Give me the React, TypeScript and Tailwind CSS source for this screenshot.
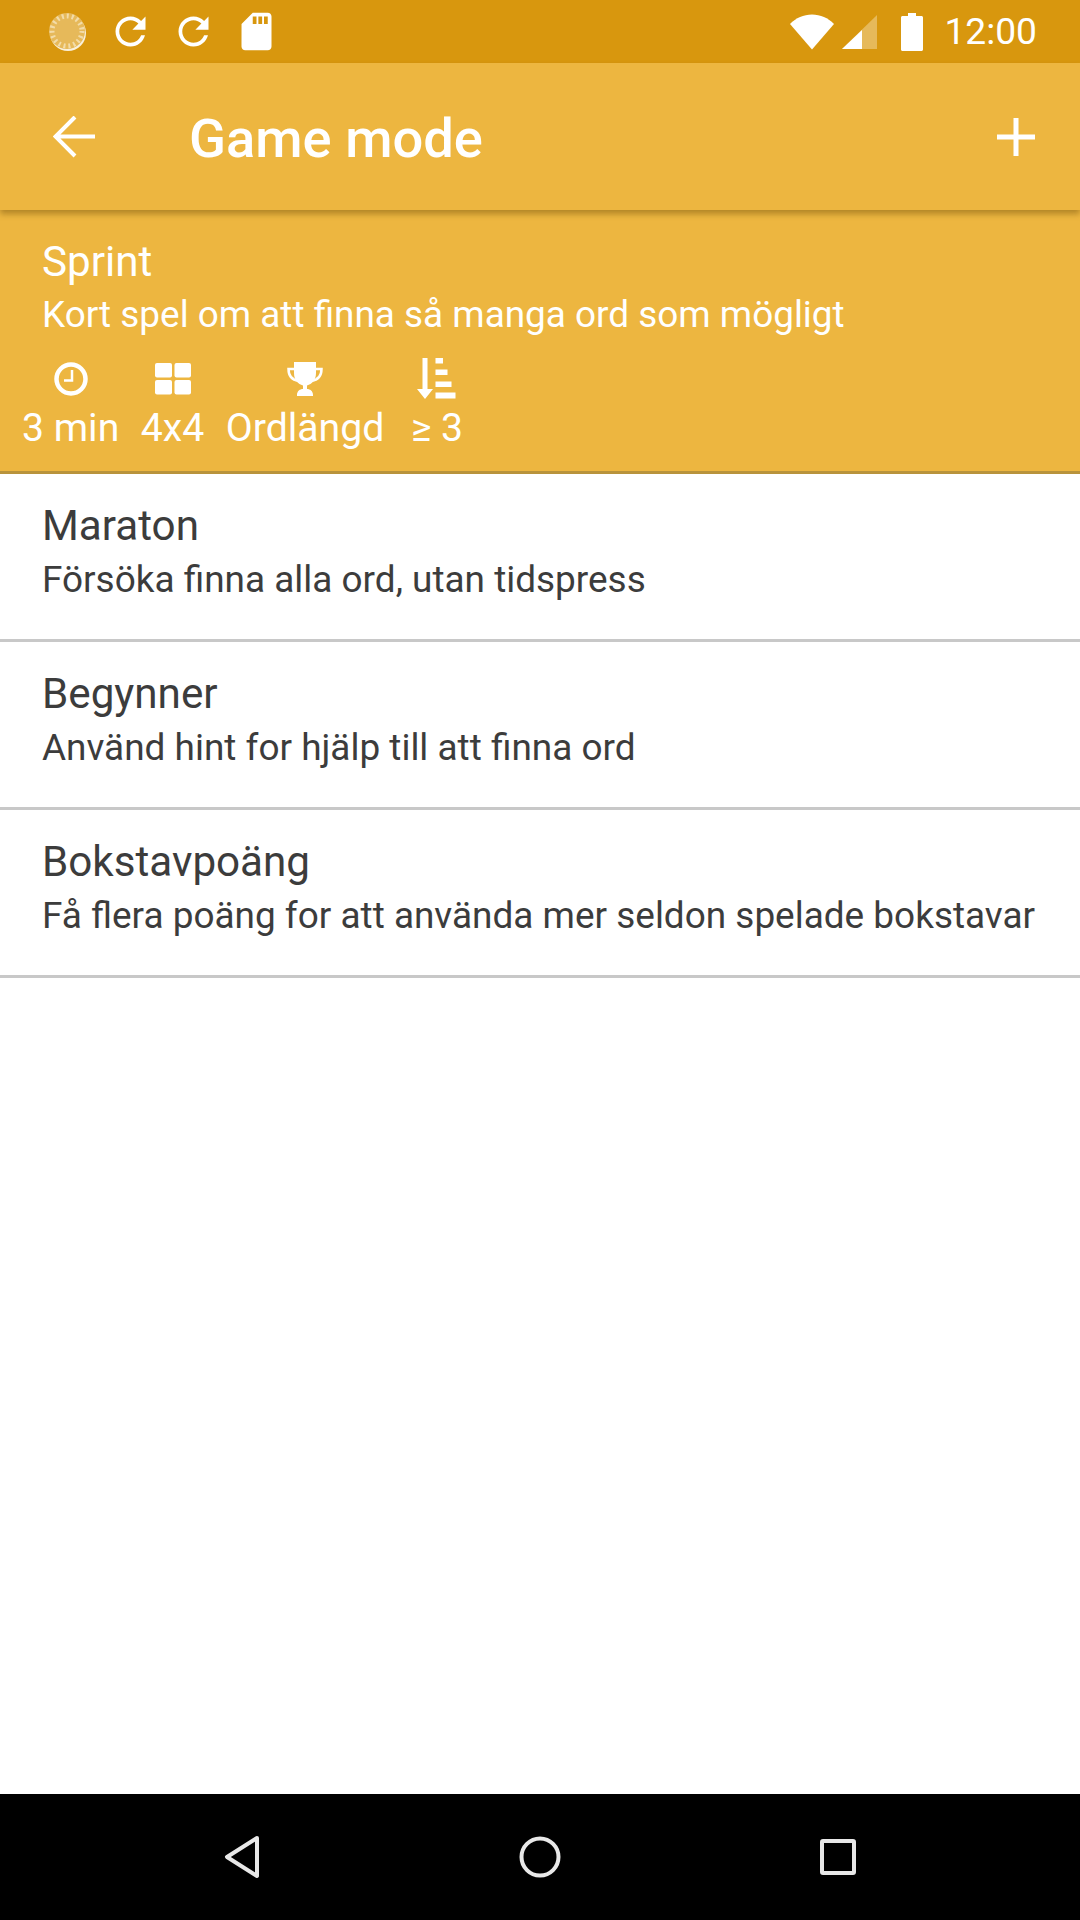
import React from 'react';

const RefreshIcon = () => (
  <svg viewBox="0 0 24 24" className="w-[45px] h-[45px] fill-white">
    <path d="M17.65 6.35C16.2 4.9 14.21 4 12 4c-4.42 0-7.99 3.58-7.99 8s3.57 8 7.99 8c3.73 0 6.84-2.55 7.73-6h-2.08c-.82 2.33-3.04 4-5.65 4-3.31 0-6-2.69-6-6s2.69-6 6-6c1.66 0 3.14.69 4.22 1.78L13 11h7V4l-2.35 2.35z" />
  </svg>
);

const StatusBar = () => (
  <div className="h-[63px] bg-[#d8970e] flex items-center justify-between pl-[49px] pr-[43px]">
    <div className="flex items-center">
      <svg viewBox="0 0 38 38" className="w-[38px] h-[38px]">
        <circle cx="19" cy="20" r="18" fill="#ffffff" opacity="0.85" />
        <circle cx="18" cy="18" r="18" fill="#e6b95a" />
        <circle cx="18" cy="18" r="15" fill="none" stroke="#f3dca8" strokeWidth="5" strokeDasharray="2 3" />
      </svg>
      <div className="flex items-center gap-[18px] ml-[21px]">
        <RefreshIcon />
        <RefreshIcon />
        <svg viewBox="0 0 24 24" className="w-[45px] h-[45px] fill-white">
          <path d="M18 2h-8L4.02 8 4 20c0 1.1.9 2 2 2h12c1.1 0 2-.9 2-2V4c0-1.1-.9-2-2-2zm-6 6h-2V4h2v4zm3 0h-2V4h2v4zm3 0h-2V4h2v4z" />
        </svg>
      </div>
    </div>
    <div className="flex items-center">
      <svg viewBox="0 0 46 38" className="w-[46px] h-[38px] fill-white">
        <path d="M23 36.500 L1 11 C7 5 14.500 1.500 23 1.500 C31.500 1.500 39 5 45 11 Z" />
      </svg>
      <svg viewBox="0 0 36 36" className="w-[36px] h-[36px] ml-[7px]">
        <path d="M0 35 L35 1 V35 Z" fill="#e6b95a" />
        <path d="M0 35 L20 16 V35 Z" fill="#ffffff" />
      </svg>
      <svg viewBox="0 0 22 38" className="w-[22px] h-[38px] ml-[23px] fill-white">
        <path d="M7 0h8v3h5.500c.8 0 1.500.7 1.500 1.500V36.500c0 .8-.7 1.500-1.500 1.500H1.500C.7 38 0 37.300 0 36.500V4.500C0 3.700.7 3 1.500 3H7z" />
      </svg>
      <span className="ml-[21px] text-[37.200px] text-white font-['Roboto',sans-serif] leading-none">12:00</span>
    </div>
  </div>
);

const Toolbar = () => (
  <div className="relative z-10 h-[147px] bg-[#edb640] flex items-center pl-[53px] pr-[45px] shadow-[0_4px_6px_rgba(90,60,0,0.4)]">
    <svg viewBox="0 0 42 42" className="w-[42px] h-[42px] stroke-white fill-none" strokeWidth="4">
      <path d="M42 20.500H4M22 1 2.500 20.500 22 40" />
    </svg>
    <span className="ml-[94px] mt-[5px] text-[54.300px] font-medium text-white font-['Roboto',sans-serif] leading-none">Game mode</span>
    <svg viewBox="0 0 38 38" className="ml-auto w-[38px] h-[38px] stroke-white fill-none" strokeWidth="5">
      <path d="M19 0v38M0 19h38" />
    </svg>
  </div>
);

const stats = [
  {
    label: '3 min',
    icon: (
      <svg viewBox="0 0 34 34" className="w-[34px] h-[34px]">
        <circle cx="17" cy="17" r="14.500" fill="none" stroke="#fff" strokeWidth="4.500" />
        <path d="M18 8v10.500H10" fill="none" stroke="#fff" strokeWidth="2.500" />
      </svg>
    ),
  },
  {
    label: '4x4',
    icon: (
      <svg viewBox="0 0 36 32" className="w-[36px] h-[32px] fill-white">
        <rect x="0" y="0" width="17" height="14.500" rx="2" />
        <rect x="19.500" y="0" width="16.500" height="14.500" rx="2" />
        <rect x="0" y="17" width="17" height="14.500" rx="2" />
        <rect x="19.500" y="17" width="16.500" height="14.500" rx="2" />
      </svg>
    ),
  },
  {
    label: 'Ordlängd',
    icon: (
      <svg viewBox="0 0 36 34" className="w-[36px] h-[34px]">
        <path d="M7 0h22v11c0 7-4 11-9 12.500V27c3 0 6 2 6 6v1H10v-1c0-4 3-6 6-6v-3.500C11 22 7 18 7 11z" fill="#fff" />
        <path d="M8 7H1.500c0 7 4 11 10 12M28 7h6.500c0 7-4 11-10 12" fill="none" stroke="#fff" strokeWidth="2.500" />
      </svg>
    ),
  },
  {
    label: '≥ 3',
    icon: (
      <svg viewBox="0 0 40 41" className="w-[40px] h-[41px] fill-white">
        <path d="M5.500 0h5v31H16l-8 10-8-10h5.500z" />
        <rect x="18.500" y="0" width="7.500" height="5.500" />
        <rect x="18.500" y="11.500" width="12" height="5.500" />
        <rect x="18.500" y="23.500" width="16" height="5.500" />
        <rect x="18.500" y="34.500" width="20" height="6" />
      </svg>
    ),
  },
];

const modes = [
  { title: 'Maraton', text: 'Försöka finna alla ord, utan tidspress' },
  { title: 'Begynner', text: 'Använd hint for hjälp till att finna ord' },
  { title: 'Bokstavpoäng', text: 'Få flera poäng for att använda mer seldon spelade bokstavar' },
];

export default function App() {
  return (
    <div className="w-[1080px] h-[1920px] flex flex-col bg-white overflow-hidden font-['Roboto',sans-serif]">
      <StatusBar />
      <Toolbar />

      {/* Selected mode */}
      <div className="h-[264px] bg-[#edb640] border-b-[3px] border-[#b8933c] pt-[27px] text-white">
        <div className="pl-[42px] text-[42.200px] leading-[50px]">Sprint</div>
        <div className="pl-[42px] text-[36.900px] leading-[56px]">Kort spel om att finna så manga ord som mögligt</div>
        <div className="flex gap-[21.500px] pl-[22px] mt-[15px]">
          {stats.map((s) => (
            <div key={s.label} className="flex flex-col items-center last:ml-[5px]">
              <div className="h-[41px] flex items-center">{s.icon}</div>
              <span className="text-[39.200px] leading-[58px]">{s.label}</span>
            </div>
          ))}
        </div>
      </div>

      {/* Other modes */}
      {modes.map((m) => (
        <div key={m.title} className="h-[168px] shrink-0 border-b-[3px] border-[#c8c8c8] pt-[27px] pl-[42px] text-[#3c3c3c]">
          <div className="text-[42.200px] leading-[50px]">{m.title}</div>
          <div className="text-[36.950px] leading-[57px]">{m.text}</div>
        </div>
      ))}

      <div className="flex-1" />

      {/* Nav bar */}
      <div className="h-[126px] bg-black flex items-center justify-center">
        <div className="w-[632px] flex items-center justify-between">
          <svg viewBox="0 0 36 44" className="w-[36px] h-[44px] fill-none stroke-[#e8e8e8]" strokeWidth="4" strokeLinejoin="round">
            <path d="M33 3 3 22l30 19z" />
          </svg>
          <svg viewBox="0 0 42 42" className="w-[42px] h-[42px] fill-none stroke-[#e8e8e8]" strokeWidth="4">
            <circle cx="21" cy="21" r="18.500" />
          </svg>
          <svg viewBox="0 0 36 36" className="w-[36px] h-[36px] fill-none stroke-[#e8e8e8]" strokeWidth="4" strokeLinejoin="round">
            <rect x="2" y="2" width="32" height="32" rx="1" />
          </svg>
        </div>
      </div>
    </div>
  );
}
